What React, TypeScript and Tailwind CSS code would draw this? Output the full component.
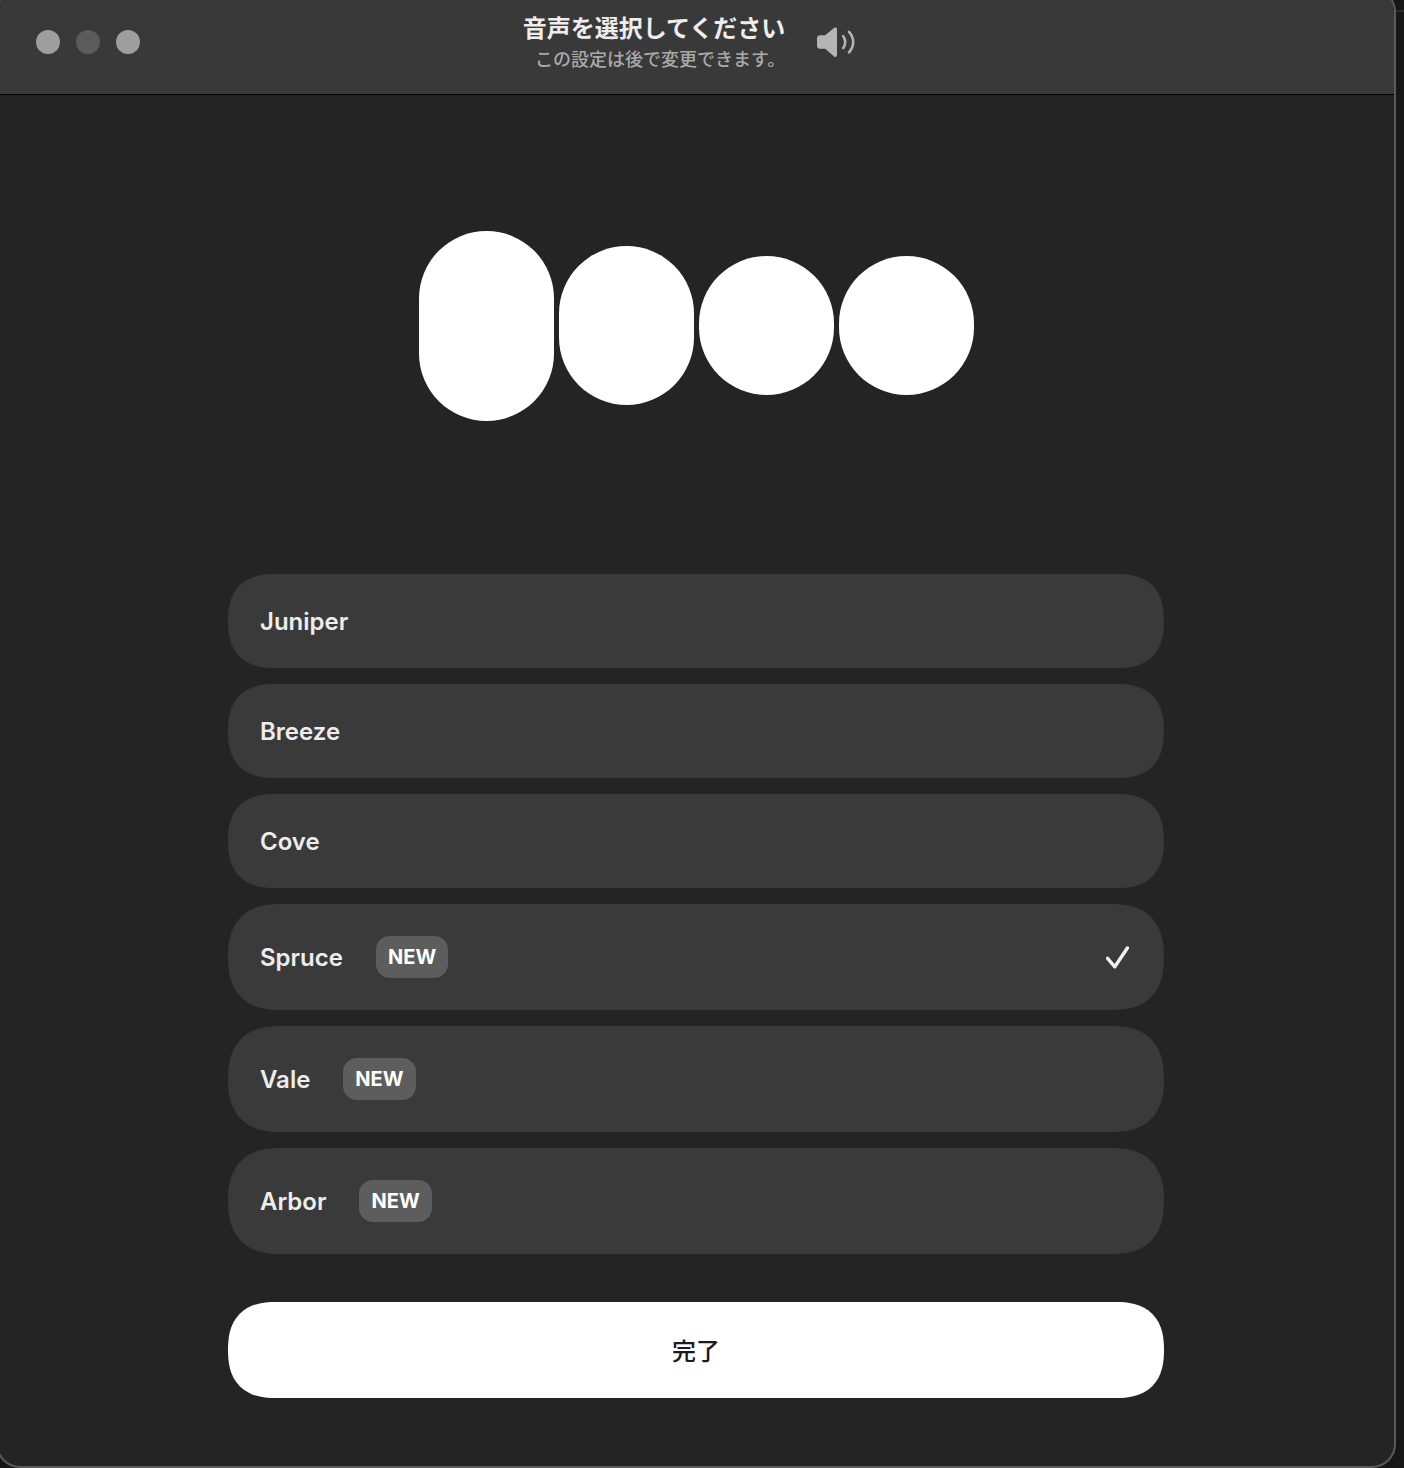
import React, { useState } from "react";

type Voice = {
  id: string;
  name: string;
  isNew?: boolean;
};

const voices: Voice[] = [
  { id: "juniper", name: "Juniper" },
  { id: "breeze", name: "Breeze" },
  { id: "cove", name: "Cove" },
  { id: "spruce", name: "Spruce", isNew: true },
  { id: "vale", name: "Vale", isNew: true },
  { id: "arbor", name: "Arbor", isNew: true },
];

// heights of the voice preview bars
const levels = [190, 159, 139, 139];

const SpeakerIcon = () => (
  <svg width="52" height="32" viewBox="0 0 52 32" fill="none" aria-hidden="true">
    <path
      d="M3.5 8.2H8.2L17 0.9C18.3 -0.2 20 0.6 20 2.3V28C20 29.7 18.3 30.5 17 29.4L8.2 21.8H3.5C1.2 21.8 0 20.6 0 18.4V11.6C0 9.4 1.2 8.2 3.5 8.2Z"
      fill="currentColor"
    />
    <path
      d="M26.2 9.2C28.9 12.6 28.9 17.6 26.2 21M32 4.8C37.6 11 37.6 19.2 32 25.4"
      stroke="currentColor"
      strokeWidth="2.6"
      strokeLinecap="round"
    />
  </svg>
);

const CheckIcon = () => (
  <svg width="24" height="24" viewBox="0 0 24 24" fill="none" aria-hidden="true">
    <path
      d="M1.6 13.4L8.8 21.8L21.4 3"
      stroke="currentColor"
      strokeWidth="3.4"
      strokeLinecap="round"
      strokeLinejoin="round"
    />
  </svg>
);

const TitleBar: React.FC = () => (
  <header className="grid grid-cols-[1fr_auto_1fr] items-start border-b border-black bg-[#393939] pt-[22px] pb-5">
    <div className="flex gap-4 pt-[18px] pl-[38px]">
      <button aria-label="閉じる" className="size-6 rounded-full bg-[#9e9e9e]" />
      <button aria-label="しまう" className="size-6 rounded-full bg-[#5c5c5c]" />
      <button aria-label="拡大" className="size-6 rounded-full bg-[#9e9e9e]" />
    </div>
    <div className="flex items-center gap-8">
      <div className="text-right">
        <h1 className="text-2xl leading-[34px] font-bold text-[#ededed]">
          音声を選択してください
        </h1>
        <p className="text-lg leading-7 font-medium text-[#a9a9a9]">
          この設定は後で変更できます。
        </p>
      </div>
      <button aria-label="音量" className="text-[#b5b5b5]">
        <SpeakerIcon />
      </button>
    </div>
  </header>
);

const VoiceOption: React.FC<{
  voice: Voice;
  checked: boolean;
  onSelect: (id: string) => void;
}> = ({ voice, checked, onSelect }) => (
  <label
    htmlFor={voice.id}
    className="flex cursor-pointer items-center rounded-[60px] bg-[#3a3a3a] p-8 [corner-shape:superellipse(1.3)]"
  >
    <input
      type="radio"
      id={voice.id}
      name="voice"
      className="sr-only"
      checked={checked}
      onChange={() => onSelect(voice.id)}
    />
    <span className="pt-0.5 text-2xl leading-7 font-semibold text-[#ededed]">
      {voice.name}
    </span>
    {voice.isNew && (
      <span className="ml-[33px] rounded-[14px] bg-[#5d5d5d] px-3 text-xl leading-[42px] font-bold text-white">
        NEW
      </span>
    )}
    {checked && (
      <span className="ml-auto pr-0.5 text-[#f0f0f0]">
        <CheckIcon />
      </span>
    )}
  </label>
);

export default function App() {
  const [selected, setSelected] = useState("spruce");

  return (
    <div
      lang="ja"
      className="flex overflow-hidden bg-[#171717] font-['Inter','Noto_Sans_CJK_JP',sans-serif]"
    >
      <div className="-mt-3 -ml-1 flex-1 overflow-hidden rounded-[24px] border-2 border-[#5a5a5a] bg-[#242424]">
        <TitleBar />
        <main className="mx-auto max-w-[936px] pt-[135px] pb-[68px]">
          <div className="flex h-[191px] items-center justify-center gap-[5px]">
            {levels.map((height, index) => (
              <div
                key={index}
                className="w-[135px] rounded-full bg-white"
                style={{ height }}
              />
            ))}
          </div>
          <fieldset aria-label="音声" className="mt-[153px] flex flex-col gap-4">
            {voices.map((voice) => (
              <VoiceOption
                key={voice.id}
                voice={voice}
                checked={voice.id === selected}
                onSelect={setSelected}
              />
            ))}
          </fieldset>
          <button className="mt-12 w-full rounded-[60px] bg-white pt-[34px] pb-[30px] text-2xl leading-8 font-medium text-[#1c1c1c] [corner-shape:superellipse(1.3)]">
            完了
          </button>
        </main>
      </div>
      <div className="w-2 pt-[10px]">
        <div className="h-0.5 bg-[#2c2c2c]" />
      </div>
    </div>
  );
}
